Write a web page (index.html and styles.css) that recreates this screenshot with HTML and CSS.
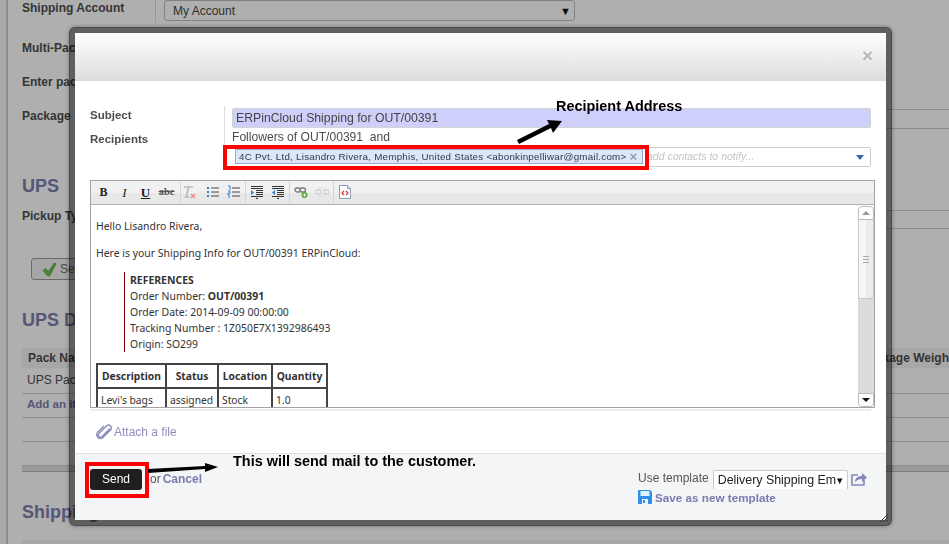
FILE: index.html
```html
<!DOCTYPE html>
<html lang="en">
<head>
<meta charset="utf-8">
<title>Shipping mail</title>
<link rel="stylesheet" href="styles.css">
</head>
<body>
<div class="page">
  <div class="rail"></div>
  <main class="sheet">
    <div class="row row-first"><div class="label">Shipping Account</div><div class="select-wrap"><div class="bg-select"><span>My Account</span><span class="bg-arrow">▼</span></div></div></div>
    <div class="row"><div class="label">Multi-Pac</div></div>
    <div class="row"><div class="label">Enter pac</div></div>
    <div class="row"><div class="label">Package</div><div class="field"></div></div>
    <h2 class="h-ups">UPS</h2>
    <div class="row row-pickup"><div class="label">Pickup Ty</div><div class="field"></div></div>
    <div class="bg-btn"><svg class="check" viewBox="0 0 16 16"><path d="M1 9l3-2 3 3 6-9 2 1-7 13h-2z" fill="#6fc24a" stroke="#4d8f33" stroke-width=".7"/></svg><span>Se</span></div>
    <h2 class="h-ups-d">UPS D</h2>
    <div class="bg-thead"><span>Pack Na</span><span>Package Weigh</span></div>
    <div class="bg-tr bg-tr-a">UPS Pac</div>
    <div class="bg-tr bg-link">Add an it</div>
    <div class="bg-tr"></div>
    <div class="bg-tr"></div>
    <div class="bg-gap"></div>
    <h2 class="h-ship">Shipping</h2>
    <div class="bg-thead bg-thead-last"></div>
  </main>
</div>

<div class="overlay"></div>

<section class="modal">
  <header class="m-head"><span class="close">×</span></header>
  <div class="m-body">
    <div class="form">
      <div class="form-labels"><div>Subject</div><div>Recipients</div></div>
      <div class="form-fields">
        <div class="subject">ERPinCloud Shipping for OUT/00391</div>
        <div class="followers">Followers of OUT/00391&nbsp; and</div>
        <div class="recip">
          <span class="chip">4C Pvt. Ltd, Lisandro Rivera, Memphis, United States &lt;abonkinpelliwar@gmail.com&gt;<b class="chip-x">×</b></span>
          <span class="ph">add contacts to notify...</span>
          <span class="recip-arrow"></span>
        </div>
      </div>
    </div>

    <div class="editor">
      <div class="toolbar">
        <div class="tgroup tgroup-first">
          <span class="tb tb-b">B</span>
          <span class="tb tb-i">I</span>
          <span class="tb tb-u">U</span>
          <span class="tb tb-s">abc</span>
        </div>
        <div class="tgroup tgroup-mid">
          <span class="tb tb-clear"><svg viewBox="0 0 14 14"><path d="M2 2h9M6.500 2L4.500 11M2.500 12h5" fill="none" stroke="#b9b9b9" stroke-width="1.600"/><path d="M9 9l4 4M13 9l-4 4" stroke="#e88" stroke-width="1.400"/></svg></span>
          <span class="tb"><svg viewBox="0 0 14 14"><path d="M5 3h8M5 7h8M5 11h8" stroke="#444" stroke-width="1"/><path d="M1 3h2M1 7h2M1 11h2" stroke="#2f7fd0" stroke-width="2"/></svg></span>
          <span class="tb"><svg viewBox="0 0 14 14"><path d="M5 3h8M5 7h8M5 11h8" stroke="#444" stroke-width="1"/><path d="M1 1h2v4M1 6h2v2H1v2h2M1 12h2" fill="none" stroke="#2f7fd0" stroke-width="1"/></svg></span>
        </div>
        <div class="tgroup">
          <span class="tb"><svg viewBox="0 0 14 14"><path d="M1 1.500h12M1 3.500h12M6 5.500h7M6 7.500h7M6 9.500h7M1 11.500h12M6 13.500h2" stroke="#333" stroke-width="1"/><path d="M1 5l3 2.500L1 10z" fill="#2f7fd0"/></svg></span>
          <span class="tb"><svg viewBox="0 0 14 14"><path d="M1 1.500h12M1 3.500h12M6 5.500h7M6 7.500h7M6 9.500h7M1 11.500h12M6 13.500h2" stroke="#333" stroke-width="1"/><path d="M4 5L1 7.500 4 10z" fill="#2f7fd0"/></svg></span>
        </div>
        <div class="tgroup">
          <span class="tb"><svg viewBox="0 0 14 14"><path d="M1 5a2 2 0 012-2h1.500a2 2 0 010 4H3a2 2 0 01-2-2zM6 5a2 2 0 012-2h1.500a2 2 0 010 4H8a2 2 0 01-2-2z" fill="none" stroke="#777" stroke-width="1.300"/><circle cx="10.500" cy="10" r="3" fill="#52a83a"/><path d="M9 10h3M10.500 8.500v3" stroke="#fff"/></svg></span>
          <span class="tb"><svg viewBox="0 0 14 14"><path d="M1 7a2 2 0 012-2h1a2 2 0 010 4H3a2 2 0 01-2-2zM9 7a2 2 0 012-2h1a2 2 0 010 4h-1a2 2 0 01-2-2z" fill="none" stroke="#c9d2dc" stroke-width="1.400"/><path d="M7 2v3M7 9v3M4 2l1 2M10 2L9 4M4 12l1-2M10 12l-1-2" stroke="#d5dbe2"/></svg></span>
        </div>
        <div class="tgroup tgroup-last">
          <span class="tb"><svg viewBox="0 0 14 14"><path d="M1.500.5h8l3 3v10h-11z" fill="#fbfbfd" stroke="#8a9ab0"/><path d="M9.500.5v3h3" fill="#dde" stroke="#8a9ab0"/><path d="M6 6L4 8l2 2M8 6l2 2-2 2" fill="none" stroke="#d33" stroke-width="1.200"/></svg></span>
        </div>
      </div>
      <div class="e-main">
        <div class="e-content">
          <p class="e-p e-hello">Hello Lisandro Rivera,</p>
          <p class="e-p e-here">Here is your Shipping Info for OUT/00391 ERPinCloud:</p>
          <blockquote class="quote">
            <strong>REFERENCES</strong><br>
            Order Number: <strong>OUT/00391</strong><br>
            Order Date: 2014-09-09 00:00:00<br>
            Tracking Number : 1Z050E7X1392986493<br>
            Origin: SO299
          </blockquote>
          <table class="items">
            <tr><th class="c1">Description</th><th class="c2">Status</th><th class="c3">Location</th><th class="c4">Quantity</th></tr>
            <tr><td>Levi's bags</td><td>assigned</td><td>Stock</td><td>1.0</td></tr>
          </table>
        </div>
        <div class="sbar">
          <div class="sb-btn sb-up"><i></i></div>
          <div class="sb-thumb"><i></i><i></i><i></i></div>
          <div class="sb-track"></div>
          <div class="sb-btn sb-down"><i></i></div>
        </div>
      </div>
    </div>
    <div class="e-rule"></div>
    <div class="attach">
      <svg class="clip" viewBox="0 0 16 16"><path d="M14 4.500L6 12.500a2 2 0 01-3-3l7.500-7.500a2.800 2.800 0 014 4L6.500 14a3.800 3.800 0 01-5.200-5.200L8 2" fill="none" stroke="#8f8ebe" stroke-width="1.400"/></svg>
      <span>Attach a file</span>
    </div>
  </div>
  <footer class="m-foot">
    <div class="foot-left"><button class="send">Send</button><span class="or">or</span><a class="cancel">Cancel</a></div>
    <div class="foot-right">
      <div class="tpl-row">
        <span class="tpl-label">Use template</span>
        <div class="tpl-select"><span>Delivery Shipping Em</span><i>▾</i></div>
        <svg class="share" viewBox="0 0 16 14"><path d="M7 3H1v10h12V8" fill="none" stroke="#8887bb" stroke-width="1.600"/><path d="M4 10c0-4 3-6 7-6V1l5 4.500L11 10V7C8 7 6 8 4 10z" fill="#8887bb"/></svg>
      </div>
      <div class="save-row">
        <svg class="disk" viewBox="0 0 14 14"><path d="M1 0h11l2 2v11a1 1 0 01-1 1H1a1 1 0 01-1-1V1a1 1 0 011-1z" fill="#2f8fe8"/><path d="M2.500 1h9v5h-9z" fill="#dff0ff"/><path d="M4 9h6v5H4z" fill="#eef6ff"/><path d="M5 10h2v3H5z" fill="#2f8fe8"/></svg>
        <a class="save-link">Save as new template</a>
      </div>
    </div>
  </footer>
  <svg class="grip" viewBox="0 0 10 10"><path d="M1 9l8-8M4 9l5-5M7 9l2-2" stroke="#333" stroke-width="1"/></svg>
</section>

<div class="redbox redbox-recip"></div>
<div class="redbox redbox-send"></div>
<svg class="arrows" viewBox="0 0 949 544">
  <path d="M517 140L549 124 547 120 562 121 553 133 551 128 519 144z" fill="#000"/>
  <path d="M148 469L205 466 205 463 218 467 205 472 205 469 148 473z" fill="#000"/>
</svg>
<div class="note note-recip">Recipient Address</div>
<div class="note note-send">This will send mail to the customer.</div>
</body>
</html>
```

FILE: styles.css
```css
* { box-sizing: border-box; }
html, body { margin: 0; padding: 0; height: 544px; overflow: hidden; }
body { font-family: "Liberation Sans", Arial, sans-serif; font-size: 12px; color: #4c4c4c; background: #fbfbfb; }

.page { display: flex; height: 544px; overflow: hidden; }
.rail { width: 8px; flex: none; background: #eff4f8; border-right: 2px solid #c8c8c8; }
.sheet { flex: 1; padding-left: 14px; min-width: 0; }
.row { display: flex; height: 34px; }
.label { width: 134px; flex: none; font-weight: bold; line-height: 14px; padding-top: 7px; color: #4c4c4c; white-space: nowrap; }
.row-first .label { padding-top: 1px; border-right: 1px solid #d8d8d8; height: 23px; }
.select-wrap { padding-left: 8px; }
.bg-select { width: 411px; height: 21px; border: 1px solid #bbb; border-radius: 3px; padding: 0 3px 0 8px; display: flex; justify-content: space-between; align-items: center; font-size: 12px; color: #444; }
.bg-arrow { font-size: 11px; color: #111; }
.field { flex: 1; height: 20px; margin-top: 7px; border-top: 1px solid #ccc; border-bottom: 1px solid #ccc; }
h2 { margin: 0; font-size: 18px; line-height: 22px; color: #7c7bad; font-weight: bold; white-space: nowrap; }
.h-ups { margin-top: 39px; }
.row-pickup { margin-top: 12px; height: 35px; }
.row-pickup .label { padding-top: 0; }
.row-pickup .field { margin-top: 1px; height: 19px; }
.bg-btn { width: 90px; height: 22px; margin-left: 9px; margin-top: 14px; border: 1px solid #999; border-radius: 3px; background: #eee; display: flex; align-items: center; padding-left: 10px; gap: 3px; color: #666; }
.check { width: 15px; height: 15px; }
.h-ups-d { margin-top: 29px; }
.bg-thead { height: 20px; margin-top: 17px; background: #f0f0f0; font-weight: bold; display: flex; justify-content: space-between; align-items: center; padding: 0 0 0 6px; color: #4c4c4c; white-space: nowrap; }
.bg-tr { height: 24px; border-bottom: 1px solid #ccc; padding: 2px 0 0 5px; line-height: 16px; }
.bg-tr-a { height: 26px; padding-top: 4px; }
.bg-link { font-weight: bold; color: #7c7bad; font-size: 11.500px; }
.bg-gap { height: 6px; background: #ddd; border-bottom: 1px solid #bbb; }
.h-ship { margin-top: 29px; }
.bg-thead-last { margin-top: 17px; height: 10px; }

.overlay { position: fixed; inset: 0; background: rgba(0, 0, 0, .3); }

.modal { position: absolute; left: 69px; top: 27px; width: 823px; height: 499px; border: 6px solid rgba(0, 0, 0, .46); border-radius: 6px; background: #fff; background-clip: padding-box; box-shadow: 0 0 4px rgba(0, 0, 0, .35); display: flex; flex-direction: column; }
.m-head { height: 48px; flex: none; background: linear-gradient(#fff, #dcdcdc); display: flex; justify-content: flex-end; align-items: center; padding: 0 13px 3px 0; }
.close { font-size: 19px; font-weight: bold; color: #b8b8b8; line-height: 20px; }
.m-body { height: 372px; flex: none; padding: 25px 0 0 15px; }
.form { display: flex; height: 64px; }
.form-labels { width: 134px; flex: none; font-weight: bold; font-size: 11.500px; color: #4c4c4c; padding-top: 2px; }
.form-labels div { height: 24px; line-height: 14px; }
.form-fields { width: 647px; border-left: 1px solid #ddd; padding-top: 2px; }
.subject { margin-left: 7px; height: 20px; line-height: 19px; background: #cfcffb; border: 1px solid #d4d4d4; border-radius: 2px; padding-left: 3px; font-size: 12.250px; color: #444; }
.followers { margin-left: 7px; height: 19px; line-height: 19px; font-size: 12.100px; color: #4c4c4c; }
.recip { height: 20px; border: 1px solid #ccc; border-radius: 2px; display: flex; align-items: center; padding-left: 9px; }
.chip { height: 15px; line-height: 14px; margin-top: -1px; border: 1px solid #9aa9c9; background: #dee7f8; padding-left: 3px; font-size: 9.800px; letter-spacing: .24px; color: #2c3a55; display: flex; white-space: nowrap; width: 408px; flex: none; }
.chip-x { margin-left: 3px; color: #8e9bb8; font-size: 13px; line-height: 14px; letter-spacing: 0; }
.ph { margin: -2px 0 0 4px; font-style: italic; font-size: 10.500px; color: #c4c4c4; }
.recip-arrow { margin: 0 6px 0 auto; border-left: 4px solid transparent; border-right: 4px solid transparent; border-top: 5px solid #3c66a5; }

.editor { margin-top: 10px; width: 785px; height: 228px; border: 1px solid #a3a3a3; display: flex; flex-direction: column; overflow: hidden; }
.toolbar { height: 24px; flex: none; background: linear-gradient(#f1f1f1 50%, #e8e8e8 50%); border-bottom: 1px solid #b0b0b0; display: flex; }
.tgroup { height: 22px; padding-top: 2px; display: flex; border-right: 1px solid #d5d5d5; padding-right: 1px; }
.tgroup-first { padding-left: 2px; padding-right: 3px; width: 90px; }
.tgroup-last { border-right: 0; padding-left: 0; }
.tb { width: 21px; height: 18px; display: flex; align-items: center; justify-content: center; color: #222; font-family: "Liberation Serif", serif; font-size: 13px; line-height: 1; }
.tb svg { width: 14px; height: 14px; }
.tb-clear { margin-left: -3px; margin-right: 3px; }
.tb-b { font-weight: bold; font-size: 12px; }
.tb-i { font-style: italic; }
.tb-u { text-decoration: underline; font-weight: bold; }
.tb-s { text-decoration: line-through; font-size: 10.500px; font-weight: bold; color: #555; }
.e-main { flex: 1; min-height: 0; display: flex; background: #fff; padding-right: 1px; }
.e-content { width: 767px; flex: none; overflow: hidden; padding: 13px 0 0 5px; font-family: "Noto Sans", "Open Sans", sans-serif; font-size: 10.450px; line-height: 16px; color: #333; }
.e-p { margin: 0 0 11px; }
.quote { margin: 9px 0 11px 28px; padding-left: 5px; border-left: 1px solid #800000; height: 80px; }
.quote strong { font-weight: bold; }
.items { border-collapse: collapse; border: 2px solid #444; margin: 0; table-layout: fixed; width: 230px; }
.items th, .items td { border: 2px solid #444; padding: 0 3px; height: 24px; font-size: 10.300px; white-space: nowrap; }
.items th { text-align: center; }
.items td { text-align: left; color: #333; }
.c1 { width: 69px; } .c2 { width: 52px; } .c3 { width: 54px; } .c4 { width: 55px; }
.sbar { width: 16px; flex: none; padding-top: 1px; display: flex; flex-direction: column; height: 202px; }
.sb-btn { height: 14px; flex: none; border: 1px solid #bbb; border-radius: 4px 4px 0 0; background: #fff; display: flex; align-items: center; justify-content: center; }
.sb-down { border-radius: 0 0 4px 4px; }
.sb-up i { border-left: 4px solid transparent; border-right: 4px solid transparent; border-bottom: 4px solid #999; }
.sb-down i { border-left: 4px solid transparent; border-right: 4px solid transparent; border-top: 4px solid #111; }
.sb-thumb { height: 79px; flex: none; background: linear-gradient(90deg, #f7f6f4 50%, #ececea 50%); border: 1px solid #c8c8c8; border-top: 0; display: flex; flex-direction: column; align-items: center; justify-content: center; gap: 2px; }
.sb-thumb i { width: 6px; height: 1px; background: #aaa; }
.sb-track { flex: 1; background: #dcdcdc; }
.e-rule { height: 2px; margin-top: 1px; width: 781px; background: #eeeef1; }
.attach { display: flex; align-items: center; gap: 2px; margin: 13px 0 0 6px; color: #8f8ebe; font-size: 12px; line-height: 16px; }
.clip { width: 16px; height: 16px; }

.m-foot { flex: 1; min-height: 0; background: #f4f5f7; border-top: 1px solid #e0e0e0; display: flex; justify-content: space-between; padding: 15px 18px 0 15px; }
.foot-left { display: flex; align-items: center; height: 21px; }
.send { width: 52px; height: 21px; background: #1f1f1f; color: #fff; border: 0; border-radius: 3px; font: 12px "Liberation Sans", sans-serif; padding: 0 0 2px; }
.or { margin: -2px 0 0 8px; color: #555; }
.cancel { margin: -2px 0 0 2px; font-weight: bold; font-size: 12px; color: #7c7bad; }
.foot-right { width: 230px; margin-top: 1px; }
.tpl-row { display: flex; align-items: flex-start; height: 20px; }
.tpl-label { line-height: 14px; margin-top: 1px; white-space: nowrap; font-size: 12px; color: #555; }
.tpl-select { width: 135px; height: 19px; margin-left: 4px; background: #fff; border: 1px solid #ccc; border-bottom: 0; border-radius: 2px 2px 0 0; display: flex; align-items: center; padding-left: 4px; font-size: 12.400px; color: #222; white-space: nowrap; }
.tpl-select i { font-style: normal; font-size: 11px; margin-left: 1px; color: #111; }
.share { width: 16px; height: 14px; margin: 2px 0 0 3px; }
.save-row { display: flex; align-items: center; gap: 3px; }
.disk { width: 14px; height: 14px; flex: none; }
.save-link { font-weight: bold; font-size: 11.700px; color: #7c7bad; white-space: nowrap; }
.grip { position: absolute; right: -3px; bottom: -3px; width: 10px; height: 10px; }

.redbox { position: absolute; border: 4px solid #f00; }
.redbox-recip { left: 223px; top: 145px; width: 426px; height: 25px; }
.redbox-send { left: 85px; top: 462px; width: 64px; height: 36px; }
.arrows { position: absolute; left: 0; top: 0; width: 949px; height: 544px; pointer-events: none; }
.note { position: absolute; font-weight: bold; font-size: 14.450px; line-height: 16px; color: #000; white-space: nowrap; }
.note-recip { left: 556px; top: 98px; }
.note-send { left: 233px; top: 453px; }
```
